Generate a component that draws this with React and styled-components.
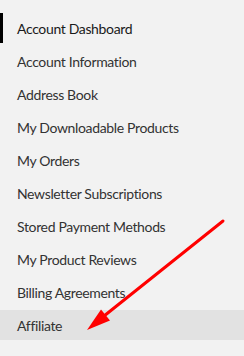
import React from 'react';
import styled, { createGlobalStyle } from 'styled-components';

const GlobalStyle = createGlobalStyle`
  html, body {
    margin: 0;
    padding: 0;
    background: #f2f2f2;
  }
`;

const StyledWrapper = styled.div`
  position: relative;
  width: 244px;
  height: 356px;
  overflow: hidden;
  background: #f2f2f2;
  font-family: Lato, 'Open Sans', sans-serif;
`;

const NavList = styled.ul`
  list-style: none;
  margin: 0;
  padding: 13px 0 0;
  display: flex;
  flex-direction: column;
  gap: 3px;
`;

const NavItem = styled.li`
  display: flex;
  align-items: center;
  height: 30px;
  padding-left: ${({ active }) => (active ? '14px' : '17px')};
  border-left: ${({ active }) => (active ? '3px solid #000' : 'none')};
  background: ${({ highlighted }) => (highlighted ? '#e2e2e2' : 'transparent')};
  color: ${({ active }) => (active ? '#1a1a1a' : '#333')};
  font-size: 14px;
  letter-spacing: -0.35px;
`;

const ArrowLayer = styled.svg`
  position: absolute;
  top: 0;
  left: 0;
  pointer-events: none;
`;

const items = [
  'Account Dashboard',
  'Account Information',
  'Address Book',
  'My Downloadable Products',
  'My Orders',
  'Newsletter Subscriptions',
  'Stored Payment Methods',
  'My Product Reviews',
  'Billing Agreements',
  'Affiliate',
];

const App = () => (
  <StyledWrapper>
    <GlobalStyle />
    <NavList>
      {items.map((label, i) => (
        <NavItem key={label} active={i === 0} highlighted={label === 'Affiliate'}>
          {label}
        </NavItem>
      ))}
    </NavList>
    <ArrowLayer width="244" height="356" viewBox="0 0 244 356">
      <line x1="223" y1="221" x2="104" y2="316" stroke="#f00" strokeWidth="3" strokeLinecap="round" />
      <polygon points="87,330 110,320.5 101,309.5" fill="#f00" />
    </ArrowLayer>
  </StyledWrapper>
);

export default App;
